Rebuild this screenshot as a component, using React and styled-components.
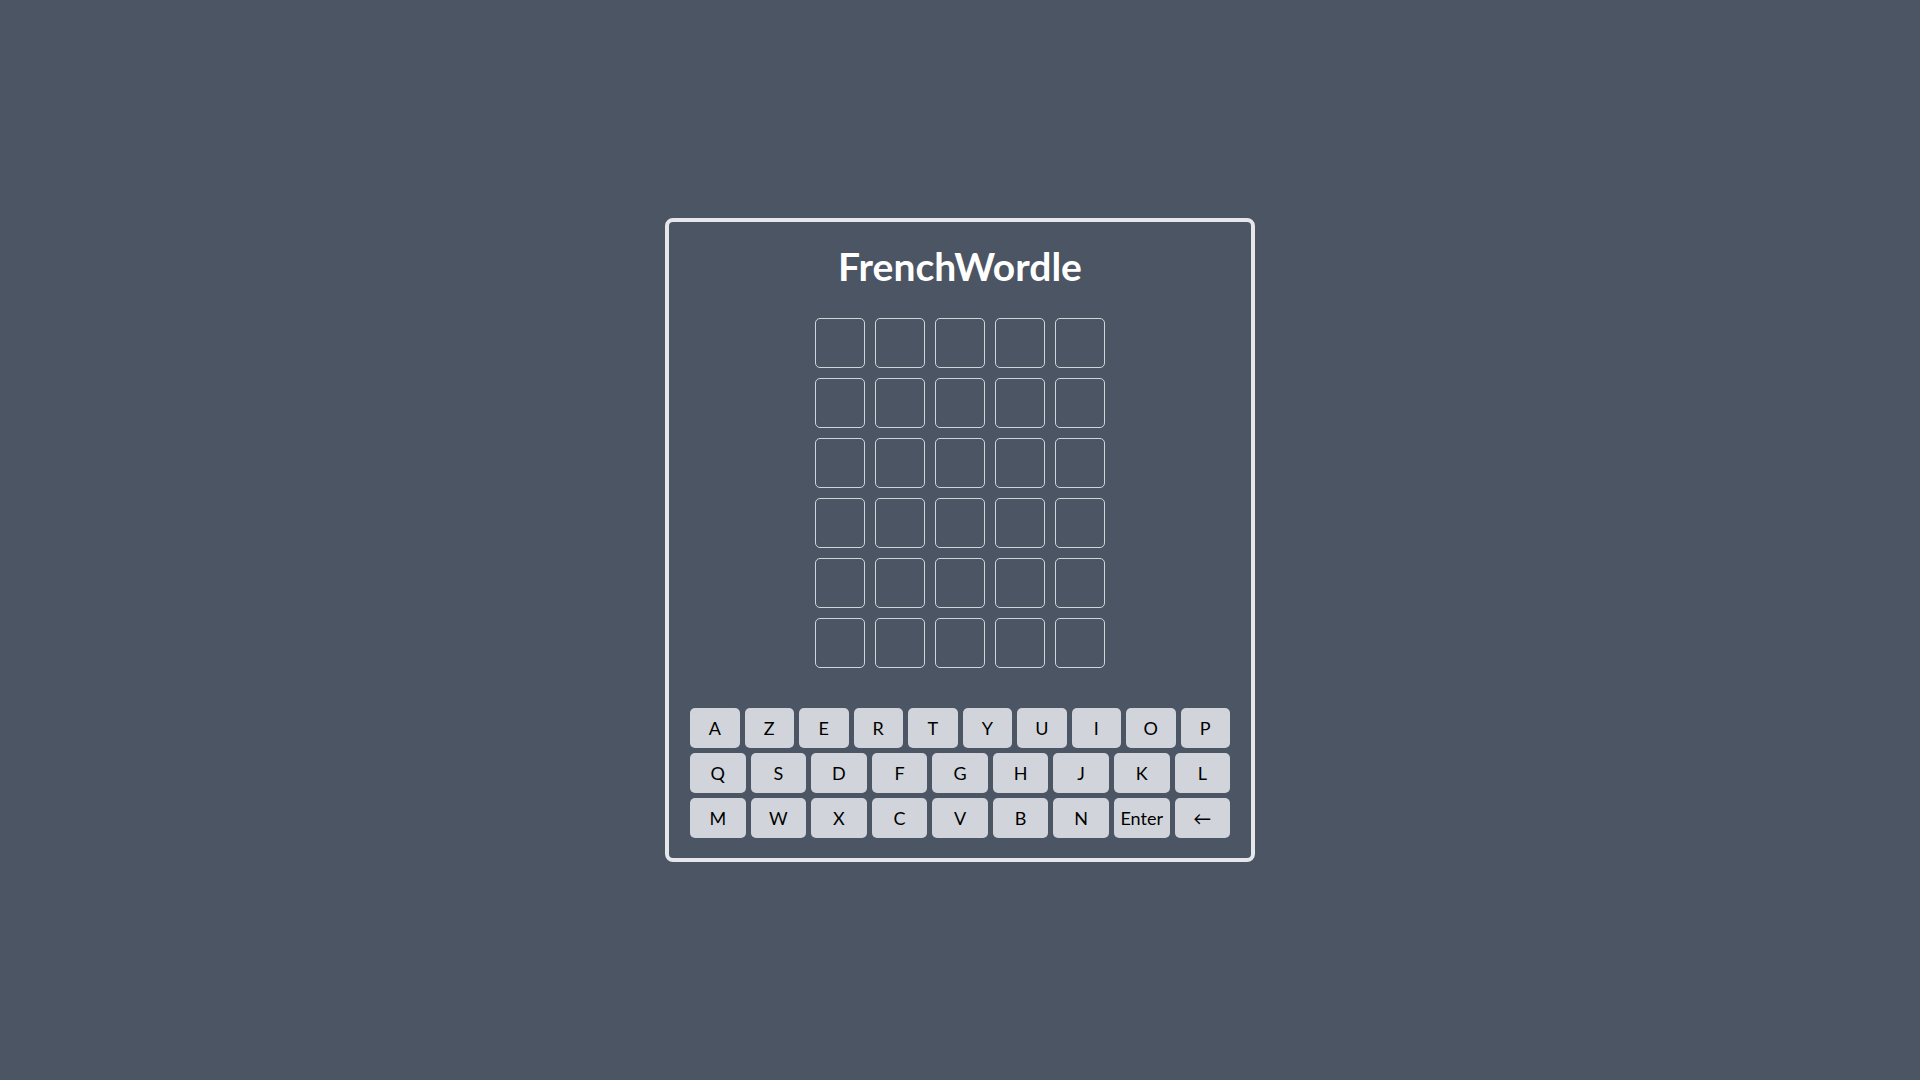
import styled, { createGlobalStyle } from "styled-components"

const GlobalStyle = createGlobalStyle`
  * {
    box-sizing: border-box;
  }

  body {
    margin: 0;
    background: #4b5563;
    font-family: "Segoe UI", Lato, "Noto Sans", sans-serif;
  }
`

const Page = styled.main`
  min-height: 100vh;
  display: flex;
  align-items: center;
  justify-content: center;
`

const Card = styled.section`
  display: flex;
  flex-direction: column;
  align-items: center;
  width: 590px;
  padding: 26px 21px 20px;
  border: 4px solid #e5e7eb;
  border-radius: 8px;
`

const Title = styled.h1`
  margin: 0;
  font-size: 39px;
  line-height: 36px;
  font-weight: 700;
  color: #ffffff;
`

const Board = styled.div`
  display: grid;
  grid-template-columns: repeat(5, 50px);
  grid-auto-rows: 50px;
  gap: 10px;
  margin-top: 34px;
`

const Tile = styled.div`
  border: 1px solid #d1d5db;
  border-radius: 5px;
`

const Keyboard = styled.div`
  display: flex;
  flex-direction: column;
  gap: 5px;
  width: 100%;
  margin-top: 40px;
`

const KeyRow = styled.div`
  display: flex;
  gap: 5px;
`

const Key = styled.button`
  flex: 1;
  height: 40px;
  padding: 0;
  border: none;
  border-radius: 5px;
  background: #d1d5db;
  color: #000000;
  font-family: inherit;
  font-size: 18px;
  cursor: pointer;
`

const rows = [
  ["A", "Z", "E", "R", "T", "Y", "U", "I", "O", "P"],
  ["Q", "S", "D", "F", "G", "H", "J", "K", "L"],
  ["M", "W", "X", "C", "V", "B", "N", "Enter", "←"]
]

function App() {
  const tiles = Array.from({ length: 30 })

  return (
    <>
      <GlobalStyle />
      <Page>
        <Card>
          <Title>FrenchWordle</Title>
          <Board>
            {tiles.map((_, index) => (
              <Tile key={index} />
            ))}
          </Board>
          <Keyboard>
            {rows.map((row, index) => (
              <KeyRow key={index}>
                {row.map((letter) => (
                  <Key key={letter}>{letter}</Key>
                ))}
              </KeyRow>
            ))}
          </Keyboard>
        </Card>
      </Page>
    </>
  )
}

export default App
